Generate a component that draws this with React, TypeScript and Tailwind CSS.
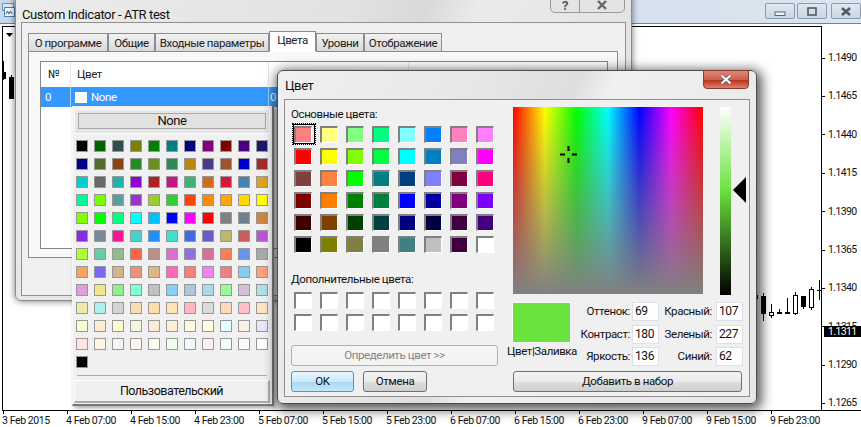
import React from 'react';

const UI = "font-['Roboto','Noto_Sans',sans-serif] tracking-[-0.4px]";

const PRICES = ['1.1490', '1.1465', '1.1440', '1.1415', '1.1390', '1.1365', '1.1340', '1.1315', '1.1290', '1.1265'];
const DATES = [
  '3 Feb 2015', '4 Feb 07:00', '4 Feb 15:00', '4 Feb 23:00', '5 Feb 07:00', '5 Feb 15:00', '5 Feb 23:00',
  '6 Feb 07:00', '6 Feb 15:00', '6 Feb 23:00', '9 Feb 07:00', '9 Feb 15:00', '9 Feb 23:00',
];

const TABS = [
  { label: 'О программе', w: 'w-[80px]' },
  { label: 'Общие', w: 'w-[47px]' },
  { label: 'Входные параметры', w: 'w-[114px]' },
  { label: 'Цвета', w: 'w-[47px]', active: true },
  { label: 'Уровни', w: 'w-[48px]' },
  { label: 'Отображение', w: 'w-[78px]' },
];

const WEB_COLORS = [
  'black', 'darkgreen', 'darkslategray', 'olive', 'green', 'teal', 'navy', 'purple', 'maroon', 'indigo', 'midnightblue',
  'darkblue', 'darkolivegreen', 'saddlebrown', 'forestgreen', 'olivedrab', 'seagreen', 'darkgoldenrod', 'darkslateblue', 'sienna', 'mediumblue', 'brown',
  'darkturquoise', 'dimgray', 'lightseagreen', 'darkviolet', 'firebrick', 'mediumvioletred', 'mediumseagreen', 'chocolate', 'crimson', 'steelblue', 'goldenrod',
  'mediumspringgreen', 'lawngreen', 'cadetblue', 'darkorchid', 'yellowgreen', 'limegreen', 'orangered', 'darkorange', 'orange', 'gold', 'yellow',
  'chartreuse', 'lime', 'springgreen', 'aqua', 'deepskyblue', 'blue', 'magenta', 'red', 'gray', 'slategray', 'peru',
  'blueviolet', 'lightslategray', 'deeppink', 'mediumturquoise', 'dodgerblue', 'turquoise', 'royalblue', 'slateblue', 'darkkhaki', 'indianred', 'mediumorchid',
  'greenyellow', 'mediumaquamarine', 'darkseagreen', 'tomato', 'rosybrown', 'orchid', 'mediumpurple', 'palevioletred', 'coral', 'cornflowerblue', 'darkgray',
  'sandybrown', 'mediumslateblue', 'tan', 'darksalmon', 'burlywood', 'hotpink', 'salmon', 'violet', 'lightcoral', 'skyblue', 'lightsalmon',
  'plum', 'khaki', 'lightgreen', 'aquamarine', 'silver', 'lightskyblue', 'lightsteelblue', 'lightblue', 'palegreen', 'thistle', 'powderblue',
  'palegoldenrod', 'paleturquoise', 'lightgray', 'wheat', 'navajowhite', 'moccasin', 'lightpink', 'gainsboro', 'peachpuff', 'pink', 'bisque',
  'lightgoldenrodyellow', 'blanchedalmond', 'lemonchiffon', 'beige', 'antiquewhite', 'papayawhip', 'cornsilk', 'lightyellow', 'lightcyan', 'linen', 'lavender',
  'mistyrose', 'oldlace', 'whitesmoke', 'seashell', 'ivory', 'honeydew', 'aliceblue', 'lavenderblush', 'mintcream', 'snow', 'white',
  'black',
];

const BASIC_COLORS = [
  '#ff8080', '#ffff80', '#80ff80', '#00ff80', '#80ffff', '#0080ff', '#ff80c0', '#ff80ff',
  '#ff0000', '#ffff00', '#80ff00', '#00ff40', '#00ffff', '#0080c0', '#8080c0', '#ff00ff',
  '#804040', '#ff8040', '#00ff00', '#008080', '#004080', '#8080ff', '#800040', '#ff0080',
  '#800000', '#ff8000', '#008000', '#008040', '#0000ff', '#0000a0', '#800080', '#8000ff',
  '#400000', '#804000', '#004000', '#004040', '#000080', '#000040', '#400040', '#400080',
  '#000000', '#808000', '#808040', '#808080', '#408080', '#c0c0c0', '#400040', '#ffffff',
];

// x, wick top, wick bottom, body top, body bottom, filled
const CANDLES: [number, number, number, number, number, boolean][] = [
  [763, 293, 321, 296, 313, true],
  [771, 304, 318, 312, 315, false],
  [779, 309, 314, 312, 313, true],
  [787, 298, 314, 312, 313, true],
  [795, 292, 315, 295, 313, false],
  [803, 296, 309, 296, 306, true],
  [811, 287, 310, 289, 307, false],
];

function Chart() {
  return (
    <svg className="absolute left-0 top-0" width="861" height="427" viewBox="0 0 861 427">
      <polygon points="6,33 13,33 9.5,37" fill="#000" />
      <rect x="3" y="61" width="1" height="19" fill="#000" />
      <rect x="2" y="72" width="4" height="7" fill="#000" />
      <rect x="11" y="75" width="1" height="3" fill="#000" />
      <rect x="9" y="77" width="5" height="22" fill="#000" />
      <rect x="757" y="295" width="1" height="4" fill="#000" />
      {CANDLES.map(([x, top, bottom, bodyTop, bodyBottom, filled]) => (
        <g key={x}>
          <rect x={x} y={top} width="1" height={bottom - top} fill="#000" />
          <rect
            x={x - 1.5}
            y={bodyTop + 0.5}
            width="4"
            height={bodyBottom - bodyTop}
            fill={filled ? '#000' : '#fff'}
            stroke="#000"
          />
        </g>
      ))}
      <rect x="819" y="280" width="1" height="20" fill="#000" />
      <rect x="817" y="290" width="5" height="1" fill="#000" />
    </svg>
  );
}

function AppIcon() {
  return (
    <svg className="absolute left-[2px] top-[3px]" width="13" height="14" viewBox="0 0 13 14">
      <rect x="0.5" y="0.5" width="11" height="7" fill="#dce9f7" stroke="#6f8fb8" />
      <rect x="2.5" y="4.5" width="10" height="9" fill="#f4f8fd" stroke="#4f7fb8" />
      <path d="M4 11l1.5-3 1.5 3 1.5-3 1.5 3" fill="none" stroke="#2f5f9f" />
    </svg>
  );
}

function WinButton({ kind }: { kind: 'min' | 'max' | 'close' }) {
  return (
    <div className="flex h-[16px] w-[30px] items-center justify-center rounded-[2px] border border-[#8d9cab] bg-[linear-gradient(#dfe8f1,#c8d6e5)]">
      <svg width="12" height="9" viewBox="0 0 12 9">
        {kind === 'min' && <rect x="1" y="5" width="10" height="3.5" fill="#f4f4f4" stroke="#5d6670" strokeWidth="1" />}
        {kind === 'max' && <rect x="2" y="1" width="8" height="7" fill="none" stroke="#4f5a66" strokeWidth="1.6" />}
        {kind === 'close' && <path d="M2 1l8 7M10 1l-8 7" stroke="#4f5a66" strokeWidth="2.6" />}
      </svg>
    </div>
  );
}

function BasicSwatch({ color, selected }: { color: string; selected?: boolean }) {
  return (
    <div
      className="relative h-[17px] w-[18px] border-b border-r border-l-2 border-t-2 border-b-white border-l-[#808080] border-r-white border-t-[#808080]"
      style={{ backgroundColor: color }}
    >
      {selected && (
        <div className="absolute left-[-4px] top-[-5px] h-[22px] w-[24px] border border-dotted border-black">
          <div className="h-full w-full border border-black" />
        </div>
      )}
    </div>
  );
}

function ColorButton({ label, className, primary }: { label: string; className: string; primary?: boolean }) {
  return (
    <div
      className={`flex h-[21px] items-center justify-center rounded-[3px] border text-[#111] ${
        primary
          ? 'border-[#3c9fd1] bg-[linear-gradient(#e8f6fd_0%,#cdeafa_50%,#a7d9f5_55%,#c4e6f8_100%)]'
          : 'border-[#707070] bg-[linear-gradient(#f3f3f3_0%,#ebebeb_50%,#dddddd_55%,#cfcfcf_100%)]'
      } ${className}`}
    >
      {label}
    </div>
  );
}

function NumberField({ label, value, pad }: { label: string; value: number; pad: string }) {
  return (
    <>
      <div className={`whitespace-nowrap text-right leading-[19px] ${pad}`}>{label}</div>
      <div className="border border-[#dde1e7] bg-white pl-[2px] text-[12px] leading-[17px]">{value}</div>
    </>
  );
}

function IndicatorWindow() {
  return (
    <div className="absolute left-[15px] top-[-8px] h-[309px] w-[617px] rounded-b-[6px] border border-[#8a8a8a] bg-[linear-gradient(115deg,#ececec_0%,#e2e2e2_45%,#d9d9d9_55%,#ebebeb_62%,#dedede_100%)] px-[5px] pb-[5px] pt-[29px] shadow-[0_0_7px_rgba(0,0,0,0.55)]">
      <div className="absolute left-[6px] top-[13px] text-[13px] leading-[17px] text-[#111]">Custom Indicator - ATR test</div>
      <div className="absolute right-[6px] top-0 flex h-[20px] w-[75px] rounded-b-[5px] border border-[#9a9a9a] bg-[#e4e4e4] text-[#555]">
        <div className="flex w-[29px] items-end justify-center border-r border-[#9a9a9a] text-[13px] font-bold leading-[12px]">?</div>
        <div className="flex flex-1 items-end justify-center">
          <svg width="12" height="12" viewBox="0 0 12 12">
            <path d="M2 1l8 8M10 1l-8 8" stroke="#666" strokeWidth="2.4" />
          </svg>
        </div>
      </div>

      <div className="h-[274px] w-[605px] border border-[#8f8f8f] bg-[#f0f0f0] pl-[6px] pt-[7px]">
        <div className="flex h-[21px] items-end text-[11.5px] leading-[16px] text-[#222]">
          {TABS.map(t => (
            <div
              key={t.label}
              className={`flex items-center justify-center whitespace-nowrap border border-[#898c95] ${t.w} ${
                t.active
                  ? 'z-10 -mb-px h-[21px] border-b-white bg-white pb-[3px]'
                  : 'h-[18px] border-b-0 bg-[linear-gradient(#f2f2f2,#d9d9d9)]'
              }`}
            >
              {t.label}
            </div>
          ))}
        </div>

        <div className="h-[207px] w-[590px] border border-[#898c95] bg-[#f8f8f8] pl-[11px] pt-[9px]">
          <div className="h-[188px] w-[568px] border border-[#82878f] bg-white text-[11.5px] text-[#222]">
            <div className="flex h-[25px] items-center">
              <div className="h-full w-[30px] border-r border-[#e3e5e8] pl-[7px] leading-[25px]">№</div>
              <div className="h-full w-[198px] border-r border-[#e3e5e8] pl-[6px] leading-[25px]">Цвет</div>
              <div className="h-full w-[140px] border-r border-[#e3e5e8]" />
            </div>
            <div className="flex h-[20px] items-center bg-[#3399ff] leading-[20px] text-white">
              <div className="h-full w-[30px] border-r border-[#a9d3fb] pl-[4px]">0</div>
              <div className="flex h-full w-[198px] items-center gap-[4px] border-r border-[#a9d3fb] pl-[4px]">
                <div className="h-[11px] w-[12px] bg-white" />
                None
              </div>
              <div className="pl-[1px]">0</div>
            </div>
          </div>
        </div>
      </div>
    </div>
  );
}

function ColorMenu() {
  return (
    <div className="absolute left-[72px] top-[106px] h-[300px] w-[202px] border-b-2 border-l border-r-2 border-b-[#777] border-l-[#f8f8f8] border-r-[#777] bg-[#f0f0f0] pl-[1px] pt-[3px] shadow-[2px_2px_4px_rgba(0,0,0,0.35)]">
      <div className="h-[25px] w-[196px] border border-[#fafafa] bg-[#e6e6e6] px-[3px] pt-[3px]">
        <div className="flex h-[16px] items-center justify-center border border-[#a8a8a8] bg-[#e2e2e2] text-[13px] text-[#111]">None</div>
      </div>
      <div className="ml-[2px] mt-[6px] grid grid-cols-[repeat(11,12px)] gap-[6px]">
        {WEB_COLORS.map((c, i) => (
          <div key={i} className="h-[12px] w-[12px] border border-[#989898]" style={{ backgroundColor: c }} />
        ))}
      </div>
      <div className="ml-[3px] mt-[7px] h-px w-[190px] bg-[#aaa]" />
      <div className="mt-[4px] flex h-[23px] w-[196px] items-center justify-center border border-b-2 border-r-2 border-b-[#aaa] border-l-white border-r-[#aaa] border-t-white text-[12.5px] tracking-[-0.5px] text-[#111]">
        Пользовательский
      </div>
    </div>
  );
}

function ColorDialog() {
  return (
    <div className="absolute left-[277px] top-[70px] h-[334px] w-[480px] rounded-[6px] border border-[#4c4c4c] bg-[linear-gradient(115deg,#f0f0f0_0%,#e8e8e8_30%,#dedede_48%,#f0f0f0_54%,#e6e6e6_100%)] px-[6px] pb-[6px] pt-[28px] shadow-[2px_3px_12px_3px_rgba(0,0,0,0.65)]">
      <div className="absolute left-[7px] top-[6px] text-[13px] leading-[17px] text-[#111]">Цвет</div>
      <div className="absolute right-[7px] top-[-1px] flex h-[19px] w-[46px] items-center justify-center rounded-b-[4px] border border-[#8b3a2e] bg-[linear-gradient(#d98a76_0%,#d2604a_50%,#b8341d_55%,#d9836f_100%)]">
        <svg width="14" height="11" viewBox="0 0 14 11">
          <path d="M2.5 1.5l9 8M11.5 1.5l-9 8" stroke="#59616b" strokeWidth="3.6" />
          <path d="M2.5 1.5l9 8M11.5 1.5l-9 8" stroke="#fff" strokeWidth="2" />
        </svg>
      </div>

      <div className="flex h-[298px] w-[466px] border border-[#8f8f8f] bg-[#f0f0f0] pl-[6px] text-[11.5px] text-[#111]">
        <div className="w-[207px] shrink-0 pt-[7px]">
          <div className="h-[15px] leading-[15px]">Основные цвета:</div>
          <div className="ml-[3px] mt-[4px] grid grid-cols-[repeat(8,18px)] gap-x-[8px] gap-y-[5px]">
            {BASIC_COLORS.map((c, i) => (
              <BasicSwatch key={i} color={c} selected={i === 0} />
            ))}
          </div>
          <div className="mt-[19px] h-[15px] leading-[15px]">Дополнительные цвета:</div>
          <div className="ml-[3px] mt-[5px] grid grid-cols-[repeat(8,18px)] gap-x-[8px] gap-y-[5px]">
            {Array.from({ length: 16 }).map((_, i) => (
              <BasicSwatch key={i} color="#ffffff" />
            ))}
          </div>
          <div className="mt-[14px] flex h-[21px] items-center justify-center rounded-[3px] border border-[#adb2b5] bg-[#f4f4f4] text-[#838383]">
            Определить цвет &gt;&gt;
          </div>
          <div className="mt-[5px] flex gap-[9px]">
            <ColorButton label="OK" className="w-[63px]" primary />
            <ColorButton label="Отмена" className="w-[64px]" />
          </div>
        </div>

        <div className="ml-[14px] w-[231px] shrink-0 pt-[7px]">
          <div className="flex h-[187px]">
            <div className="relative ml-px h-full w-[190px] shrink-0 bg-[linear-gradient(to_bottom,rgba(128,128,128,0),#808080),linear-gradient(to_right,#ff0000,#ffff00,#00ff00,#00ffff,#0000ff,#ff00ff,#ff0000)]">
              <svg className="absolute left-[46px] top-[38px]" width="19" height="19" viewBox="0 0 19 19">
                <path d="M9.5 1v5M9.5 13v5M1 9.5h5M13 9.5h5" stroke="#000" strokeWidth="2" />
              </svg>
            </div>
            <div className="ml-[17px] h-[188px] w-[11px] shrink-0 bg-[linear-gradient(#ffffff_0%,#6be33e_44%,#000000_100%)]" />
            <svg className="ml-[2px] mt-[70px] shrink-0" width="13" height="26" viewBox="0 0 13 26">
              <polygon points="0,13 13,0 13,26" fill="#000" />
            </svg>
          </div>
          <div className="mt-[8px] flex">
            <div className="w-[59px] shrink-0">
              <div className="h-[41px] w-[59px] border border-[#fafafa] bg-[#6be33e]" />
              <div className="-ml-[5px] w-[69px] whitespace-nowrap text-center leading-[16px]">Цвет|Заливка</div>
            </div>
            <div className="grid grid-cols-[61px_27px_57px_27px] gap-y-[3.5px] [grid-auto-rows:19px]">
              <NumberField label="Оттенок:" value={69} pad="pr-[2px]" />
              <NumberField label="Красный:" value={107} pad="pr-[4px]" />
              <NumberField label="Контраст:" value={180} pad="pr-[2px]" />
              <NumberField label="Зеленый:" value={227} pad="pr-[4px]" />
              <NumberField label="Яркость:" value={136} pad="pr-[2px]" />
              <NumberField label="Синий:" value={62} pad="pr-[4px]" />
            </div>
          </div>
          <ColorButton label="Добавить в набор" className="ml-px mt-[5px] w-[229px]" />
        </div>
      </div>
    </div>
  );
}

export default function App() {
  return (
    <div className={`relative h-[427px] w-[861px] overflow-hidden bg-white ${UI}`}>
      <div className="flex h-[24px] items-start justify-end gap-[2px] border-b border-[#7f7f7f] bg-[linear-gradient(90deg,#c9d9ea,#dbe5ef)] pt-[3px]">
        <WinButton kind="min" />
        <WinButton kind="max" />
        <div className="ml-[2px]">
          <WinButton kind="close" />
        </div>
      </div>
      <AppIcon />

      <div className="ml-[2px] mt-[2px] flex h-[384px] text-[10.5px] text-[#111]">
        <div className="h-[384px] w-[820px] border-l border-r border-t border-black" />
        <div className="h-[384px] pt-[13px] tracking-[-0.6px]">
          {PRICES.map(p => (
            <div key={p} className="flex h-[38.4px] items-center">
              <div className="h-px w-[3px] bg-black" />
              <span className="ml-[3px] leading-none">{p}</span>
            </div>
          ))}
        </div>
      </div>
      <div className="ml-[2px] flex border-t border-black text-[10.5px] leading-[13px] text-[#111]">
        {DATES.map(d => (
          <div key={d} className="w-[64px] shrink-0">
            <div className="ml-px h-[3px] w-px bg-black" />
            <div className="whitespace-nowrap">{d}</div>
          </div>
        ))}
      </div>
      <Chart />
      <div className="absolute left-[824px] top-[326px] h-[11px] w-[37px] bg-black pl-[4px] text-[10.5px] leading-[11px] tracking-[-0.6px] text-white">
        1.1311
      </div>

      <IndicatorWindow />
      <ColorMenu />
      <ColorDialog />
    </div>
  );
}
